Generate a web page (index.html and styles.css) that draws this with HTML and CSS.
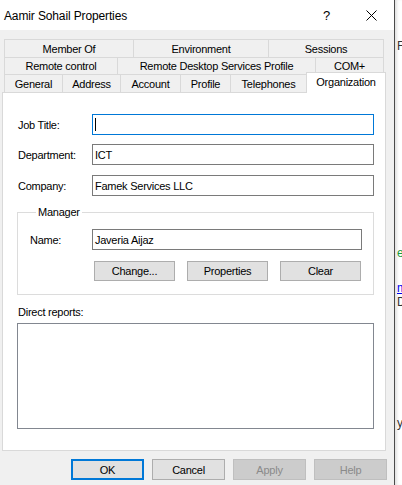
FILE: index.html
```html
<!DOCTYPE html>
<html>
<head>
<meta charset="utf-8">
<link rel="stylesheet" href="styles.css">
</head>
<body>
<div class="screen">
  <div class="dialog">
    <div class="titlebar">
      <span class="title">Aamir Sohail Properties</span>
      <span class="caption-btn help-btn">?</span>
      <span class="caption-btn">
        <svg width="11" height="11" viewBox="0 0 11 11"><path d="M0.5 0.5 L10.5 10.5 M10.5 0.5 L0.5 10.5" stroke="#000" stroke-width="1" fill="none"/></svg>
      </span>
    </div>
    <div class="body">
      <div class="tabs">
        <div class="tabrow">
          <div class="tab w129">Member Of</div>
          <div class="tab w135">Environment</div>
          <div class="tab w116 last">Sessions</div>
        </div>
        <div class="tabrow r2">
          <div class="tab w113">Remote control</div>
          <div class="tab w198">Remote Desktop Services Profile</div>
          <div class="tab w69 last">COM+</div>
        </div>
        <div class="tabrow">
          <div class="tab w58">General</div>
          <div class="tab w58">Address</div>
          <div class="tab w60">Account</div>
          <div class="tab w50">Profile</div>
          <div class="tab w76">Telephones</div>
          <div class="tab selected w80">Organization</div>
        </div>
      </div>
      <div class="panel">
        <div class="fields">
          <div class="field-row">
            <span class="label">Job Title:</span>
            <div class="input focused"><span class="caret"></span></div>
          </div>
          <div class="field-row">
            <span class="label">Department:</span>
            <div class="input">ICT</div>
          </div>
          <div class="field-row company">
            <span class="label">Company:</span>
            <div class="input">Famek Services LLC</div>
          </div>
        </div>
        <fieldset class="group">
          <legend>Manager</legend>
          <div class="field-row name-row">
            <span class="label short">Name:</span>
            <div class="input narrow">Javeria Aijaz</div>
          </div>
          <div class="btn-row">
            <div class="btn">Change...</div>
            <div class="btn">Properties</div>
            <div class="btn">Clear</div>
          </div>
        </fieldset>
        <div class="reports-label">Direct reports:</div>
        <div class="listbox"></div>
      </div>
      <div class="actions">
        <div class="abtn default">OK</div>
        <div class="abtn">Cancel</div>
        <div class="abtn disabled">Apply</div>
        <div class="abtn disabled">Help</div>
      </div>
    </div>
  </div>
  <div class="behind">
    <div class="frag f1">F</div>
    <div class="frag f2">er</div>
    <div class="frag f3">m</div>
    <div class="frag f4">D</div>
    <div class="frag f5">y</div>
  </div>
</div>
</body>
</html>
```
FILE: styles.css
```css
* { box-sizing: border-box; }
html, body { margin: 0; padding: 0; }
body {
  width: 402px;
  height: 485px;
  overflow: hidden;
  font-family: "Liberation Sans", Arial, sans-serif;
  font-size: 11px;
  letter-spacing: -0.25px;
  color: #000;
  background: #fff;
}
.screen { display: flex; width: 402px; height: 485px; }
.dialog {
  width: 395px;
  flex: none;
  display: flex;
  flex-direction: column;
  background: #f0f0f0;
  border-right: 1px solid #4a4a4a;
}
.titlebar {
  height: 30px;
  flex: none;
  background: #fff;
  display: flex;
  align-items: center;
}
.title {
  flex: 1;
  font-size: 12px;
  letter-spacing: -0.13px;
  padding-left: 4px;
  padding-top: 1px;
}
.caption-btn {
  width: 46px;
  height: 30px;
  display: flex;
  align-items: center;
  justify-content: center;
}
.help-btn { font-size: 13px; padding-left: 3px; padding-top: 1px; letter-spacing: 0; }
.body { flex: 1; padding: 9px 0 0 2px; }
.tabs { margin-left: 2px; }
.tabrow { display: flex; height: 18px; align-items: stretch; }
.tabrow.r2 { height: 17px; }
.tab {
  flex: none;
  border-top: 1px solid #d9d9d9;
  border-left: 1px solid #d9d9d9;
  display: flex;
  align-items: center;
  justify-content: center;
  white-space: nowrap;
}
.tab.last { border-right: 1px solid #d9d9d9; }
.tab.selected {
  align-self: flex-start;
  height: 21px;
  margin-top: -2px;
  padding-bottom: 2px;
  background: #fff;
  border-right: 1px solid #d9d9d9;
  position: relative;
  z-index: 1;
}
.w50 { width: 50px; }
.w58 { width: 58px; }
.w60 { width: 60px; }
.w69 { width: 69px; }
.w76 { width: 76px; }
.w80 { width: 80px; }
.w113 { width: 113px; }
.w116 { width: 116px; }
.w129 { width: 129px; }
.w135 { width: 135px; }
.w198 { width: 198px; }
.panel {
  width: 384px;
  height: 359px;
  background: #fff;
  border: 1px solid #d9d9d9;
  padding: 21px 11px 0 14px;
  display: flex;
  flex-direction: column;
}
.fields { display: flex; flex-direction: column; gap: 9px; }
.field-row { display: flex; align-items: center; height: 21px; }
.company { margin-top: 1px; }
.label { width: 75px; padding-left: 1px; flex: none; }
.label.short { width: 62px; padding-left: 0; }
.input {
  width: 282px;
  height: 21px;
  border: 1px solid #7a7a7a;
  padding: 0 2px;
  display: flex;
  align-items: center;
  white-space: nowrap;
}
.input.narrow { width: 270px; }
.input.focused { border-color: #0078d7; }
.caret { width: 1px; height: 13px; background: #000; }
.group {
  margin: 10px 0 0;
  padding: 0 11px 13px 12px;
  border: 1px solid #dcdcdc;
  min-width: 0;
}
.group legend {
  padding: 0 2px;
  margin-left: 6px;
  line-height: 13px;
}
.name-row { margin-top: 10px; }
.btn-row { display: flex; gap: 12px; margin-top: 11px; padding-left: 64px; }
.btn {
  width: 81px;
  height: 20px;
  background: #e1e1e1;
  border: 1px solid #adadad;
  display: flex;
  align-items: center;
  justify-content: center;
}
.reports-label { margin-top: 11px; line-height: 13px; padding-left: 1px; }
.listbox {
  margin-top: 4px;
  width: 357px;
  height: 106px;
  border: 1px solid #828790;
}
.actions {
  display: flex;
  justify-content: flex-end;
  gap: 8px;
  padding-right: 7px;
  margin-top: 8px;
}
.abtn {
  width: 73px;
  height: 21px;
  background: #e1e1e1;
  border: 1px solid #adadad;
  display: flex;
  align-items: center;
  justify-content: center;
}
.abtn.default { border: 2px solid #0078d7; }
.abtn.disabled { background: #cccccc; border-color: #bfbfbf; color: #8a8a8a; }
.behind {
  flex: 1;
  overflow: hidden;
  background: #fff;
  box-shadow: inset 3px 0 3px -1px rgba(0, 0, 0, 0.12);
  padding-left: 2px;
  font-size: 12px;
  white-space: nowrap;
  line-height: 14px;
}
.frag { color: #333; }
.f1 { margin-top: 39px; }
.f2 { margin-top: 193px; color: #1a9a3a; }
.f3 { margin-top: 21px; color: #0000ee; text-decoration: underline; }
.f4 { margin-top: 0; }
.f5 { margin-top: 107px; }
```
